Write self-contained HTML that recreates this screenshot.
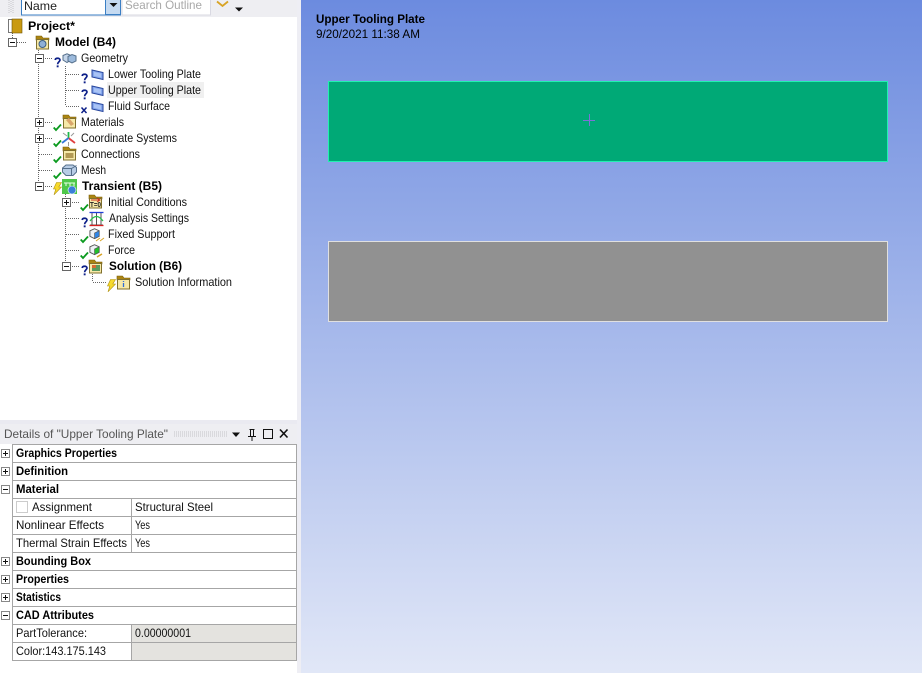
<!DOCTYPE html>
<html><head><meta charset="utf-8"><style>
html,body{margin:0;padding:0;background:#fff;width:922px;height:673px;overflow:hidden}
svg{display:block;position:absolute;left:0;top:0}
text{font-family:"Liberation Sans",sans-serif;font-size:12px;fill:#111}
.b{font-weight:bold;fill:#000}
.l{fill:none;stroke:#666;stroke-width:1;stroke-dasharray:1 1;shape-rendering:crispEdges}
.r{stroke:#a6a6a6;stroke-width:1;shape-rendering:crispEdges;fill:none}
</style></head><body>
<svg width="922" height="673" viewBox="0 0 922 673" xmlns="http://www.w3.org/2000/svg">
<defs>
<linearGradient id="bg" x1="0" y1="0" x2="0" y2="1"><stop offset="0" stop-color="#6c8bdf"/><stop offset="1" stop-color="#e1e7f7"/></linearGradient>
<symbol id="chk" viewBox="0 0 9 7" overflow="visible"><path d="M.7 3.500 3 6 8 .5" fill="none" stroke="#0a9a1e" stroke-width="1.800"/></symbol>
<symbol id="q" viewBox="0 0 8 11" overflow="visible"><path d="M1.200 3C1.400.8 6 .6 6 3c0 1.800-2.400 2-2.400 4.200" fill="none" stroke="#0c1f88" stroke-width="1.700"/><rect x="2.700" y="8.400" width="1.900" height="1.900" fill="#0c1f88"/></symbol>
<symbol id="bolt" viewBox="0 0 9 13" overflow="visible"><path d="M3.500.5h5L5.800 5H8.500L1 12.800 2.800 7H.5z" fill="#f7da2c" stroke="#b09210" stroke-width=".6"/></symbol>
<symbol id="body" viewBox="0 0 13 11" overflow="visible"><path d="M1 1 12 3.500V10.500L1 8z" fill="#86a8ee" stroke="#27459c"/><path d="M3 3 10 4.500v4L3 6.800z" fill="#a9c3f5"/></symbol>
<symbol id="cube" viewBox="0 0 15 11" overflow="visible"><path d="M1 2.500 5 .8l4 1.700v4.500L5 9.500 1 7z" fill="#c6d6ea" stroke="#56708c"/><path d="M6 3.500 10 1.500l4 1.500v5L10 10 6 8z" fill="#9cbadc" stroke="#56708c"/></symbol>
<symbol id="fold" viewBox="0 0 15 15" overflow="visible"><path d="M1 4V1h5.500L8 3h6v2H1z" fill="#ab8512" stroke="#7a5e08" stroke-width=".6"/><rect x="1.500" y="4.500" width="12" height="9.500" fill="#f6e9a8" stroke="#80702e"/></symbol>
<symbol id="cap" viewBox="0 0 13 13" overflow="visible"><path d="M1 3 6 .8 11 3v6L6 11.500 1 9z" fill="#eef2f6" stroke="#555"/><path d="M6 5.500 11 3v6L6 11.500z" fill="currentColor" stroke="#555" stroke-width=".7"/></symbol>
</defs>

<!-- chrome backgrounds -->
<rect x="0" y="0" width="297" height="17" fill="#eeeef2"/>
<rect x="297" y="0" width="4" height="673" fill="#eeeef4"/>
<rect x="0" y="420" width="297" height="4" fill="#eaeaf1"/>
<rect x="0" y="424" width="297" height="20" fill="#eeeef2"/>

<!-- viewport -->
<rect x="301" y="0" width="621" height="673" fill="url(#bg)"/>
<text x="316" y="23" class="b" textLength="109" lengthAdjust="spacingAndGlyphs">Upper Tooling Plate</text>
<text x="316" y="38" style="fill:#000" textLength="104" lengthAdjust="spacingAndGlyphs">9/20/2021 11:38 AM</text>
<rect x="328.500" y="81.500" width="559" height="80" fill="#00a976" stroke="#22f0b0" shape-rendering="crispEdges"/>
<path d="M583 120.500h12M589.500 114v12" stroke="#7d70d8" shape-rendering="crispEdges"/>
<rect x="328.500" y="241.500" width="559" height="80" fill="#919191" stroke="#e0e0e0" shape-rendering="crispEdges"/>

<!-- toolbar -->
<path d="M9 0v13M11 1v12M13 0v13" stroke="#c6c6ca" stroke-dasharray="1 1" shape-rendering="crispEdges"/>
<rect x="21.500" y="-2" width="99" height="17" fill="#fff" stroke="#3b7fc4"/>
<text x="24" y="10" style="fill:#222" textLength="33" lengthAdjust="spacingAndGlyphs">Name</text>
<rect x="106" y="0" width="15" height="15" fill="#c5daf1"/>
<path d="M105.500 0v15M120.500 0v15M106 14.500h15" stroke="#3b7fc4"/>
<path d="M109.500 3h8L113.500 7z" fill="#111"/>
<rect x="122" y="-2" width="88.500" height="17" fill="#fff" stroke="#d9d9e2"/>
<text x="125" y="9" style="fill:#a8a8a8" textLength="77" lengthAdjust="spacingAndGlyphs">Search Outline</text>
<path d="M217 1.500 222.500 6 228 1.500" fill="none" stroke="#d8a324" stroke-width="1.800"/>
<path d="M235 7.500h8L239 11.500z" fill="#111"/>

<!-- tree connectors -->
<path class="l" d="M12.500 31V38M17 42.500H27M38.500 50V182M43 58.500H52M43 122.500H52M43 138.500H52M39 154.500H52M39 170.500H52M43 186.500H52M65.500 66V106M66 74.500H80M66 90.500H80M66 106.500H80M65.500 194V262M70 202.500H80M66 218.500H80M66 234.500H80M66 250.500H80M70 266.500H80M92.500 274V282M93 282.500H106"/>
<!-- expanders -->
<g fill="#fff" stroke="#666" shape-rendering="crispEdges">
<rect x="8.500" y="38.500" width="8" height="8"/><rect x="35.500" y="54.500" width="8" height="8"/><rect x="35.500" y="118.500" width="8" height="8"/><rect x="35.500" y="134.500" width="8" height="8"/><rect x="35.500" y="182.500" width="8" height="8"/><rect x="62.500" y="198.500" width="8" height="8"/><rect x="62.500" y="262.500" width="8" height="8"/>
</g>
<path d="M10 42.500h5M37 58.500h5M37 122.500h5M39.500 120v5M37 138.500h5M39.500 136v5M37 186.500h5M64 202.500h5M66.500 200v5M64 266.500h5" stroke="#111" shape-rendering="crispEdges"/>

<!-- highlight -->
<rect x="107" y="82" width="97" height="16" fill="#f0f0f0"/>

<!-- tree icons -->
<rect x="8.500" y="19.500" width="4" height="13" fill="#fff" stroke="#777"/>
<rect x="12" y="19" width="10" height="14" fill="#c99a12" stroke="#6f5508" stroke-width=".6"/>
<use href="#fold" x="35" y="35" width="15" height="15"/><circle cx="42.500" cy="44" r="3.500" fill="#8fb0d6" stroke="#3b5f86"/>
<use href="#cube" x="62" y="53" width="15" height="11"/>
<use href="#q" x="54" y="57" width="8" height="11"/>
<use href="#body" x="91" y="69" width="13" height="11"/><use href="#q" x="81" y="73" width="8" height="11"/>
<use href="#body" x="91" y="85" width="13" height="11"/><use href="#q" x="81" y="89" width="8" height="11"/>
<use href="#body" x="91" y="101" width="13" height="11"/>
<path d="M81.500 107.500l5 5.500M86.500 107.500l-5 5.500" stroke="#0c1f88" stroke-width="1.500"/>
<use href="#fold" x="62" y="114" width="15" height="15"/><path d="M66 120l5 6 3-2-5-6z" fill="#d9a66c"/>
<use href="#chk" x="53" y="124" width="9" height="7"/>
<g fill="none" stroke-width="1.800"><path d="M68.500 138V132" stroke="#1cb84a"/><path d="M68.500 138 75 143" stroke="#e04040"/><path d="M68.500 138 62 143" stroke="#3878d8"/></g><path d="M63 133l4 3M74 133l-3 3M68.500 146v-4" stroke="#9a9a9a"/>
<use href="#chk" x="53" y="140" width="9" height="7"/>
<use href="#fold" x="62" y="146" width="15" height="15"/><rect x="65.500" y="153" width="8" height="5" fill="#b39a55"/>
<use href="#chk" x="53" y="156" width="9" height="7"/>
<path d="M62.500 168 66 165h7l3.500 2.500V172L73 175.500H66L62.500 172z" fill="#b8cde6" stroke="#56708c"/><path d="M62.500 168.500H71.500L76.500 165.500M71.500 168.500V175" fill="none" stroke="#56708c"/>
<use href="#chk" x="53" y="172" width="9" height="7"/>
<use href="#bolt" x="53" y="182" width="9" height="13"/>
<rect x="62" y="179" width="15" height="15" fill="#4fc84a"/><path d="M64 183h11M66 183v3M70 183v3M74 183v3" stroke="#e8ffe8"/><circle cx="72" cy="190" r="4" fill="#3a7fd8" stroke="#fff" stroke-width=".6"/>
<use href="#fold" x="88" y="194" width="15" height="15"/><path d="M91 200h9M97 198l3 2-3 2" fill="none" stroke="#c9301c"/><text x="90" y="207" style="font-size:7px;font-weight:bold;fill:#222" textLength="11" lengthAdjust="spacingAndGlyphs">T=0</text>
<use href="#chk" x="80" y="204" width="9" height="7"/>
<path d="M90 212.500h13M90 225h13M92 212v13M96.500 212v13M101 212v13" stroke="#555" fill="none"/><path d="M89.500 212.500h14" stroke="#1f3fd8" stroke-width="1.300"/><path d="M89.500 225.500h14" stroke="#d82020" stroke-width="1.300"/><path d="M90 221Q96.500 212 103 221" stroke="#22c24a" fill="none" stroke-width="1.200"/>
<use href="#q" x="81" y="217" width="8" height="11"/>
<use href="#cap" x="89" y="228" width="12" height="12" color="#2f86e8"/><path d="M96 241l4-3M100 241l4-3" stroke="#d8a324"/>
<use href="#chk" x="80" y="236" width="9" height="7"/>
<use href="#cap" x="89" y="244" width="12" height="12" color="#22c22a"/><path d="M97 257l5-3" stroke="#d8a324" stroke-width="1.500"/>
<use href="#chk" x="80" y="252" width="9" height="7"/>
<use href="#fold" x="88" y="259" width="15" height="15"/><rect x="92" y="265" width="8" height="6" fill="#5b9a5c"/><rect x="92" y="265" width="4" height="3" fill="#d86a30"/>
<use href="#q" x="81" y="265" width="8" height="11"/>
<use href="#fold" x="116" y="275" width="15" height="15"/><path d="M123.500 281v1M123.500 283v4" stroke="#2f6fd8" stroke-width="1.300"/>
<use href="#bolt" x="107" y="279" width="9" height="13"/>

<!-- tree text -->
<text x="28" y="30" class="b" textLength="47" lengthAdjust="spacingAndGlyphs">Project*</text>
<text x="55" y="46" class="b" textLength="61" lengthAdjust="spacingAndGlyphs">Model (B4)</text>
<text x="81" y="62" textLength="47" lengthAdjust="spacingAndGlyphs">Geometry</text>
<text x="108" y="78" textLength="93" lengthAdjust="spacingAndGlyphs">Lower Tooling Plate</text>
<text x="108" y="94" textLength="93" lengthAdjust="spacingAndGlyphs">Upper Tooling Plate</text>
<text x="108" y="110" textLength="62" lengthAdjust="spacingAndGlyphs">Fluid Surface</text>
<text x="81" y="126" textLength="43" lengthAdjust="spacingAndGlyphs">Materials</text>
<text x="81" y="142" textLength="96" lengthAdjust="spacingAndGlyphs">Coordinate Systems</text>
<text x="81" y="158" textLength="59" lengthAdjust="spacingAndGlyphs">Connections</text>
<text x="81" y="174" textLength="25" lengthAdjust="spacingAndGlyphs">Mesh</text>
<text x="82" y="190" class="b" textLength="80" lengthAdjust="spacingAndGlyphs">Transient (B5)</text>
<text x="108" y="206" textLength="79" lengthAdjust="spacingAndGlyphs">Initial Conditions</text>
<text x="109" y="222" textLength="80" lengthAdjust="spacingAndGlyphs">Analysis Settings</text>
<text x="108" y="238" textLength="67" lengthAdjust="spacingAndGlyphs">Fixed Support</text>
<text x="108" y="254" textLength="27" lengthAdjust="spacingAndGlyphs">Force</text>
<text x="109" y="270" class="b" textLength="73" lengthAdjust="spacingAndGlyphs">Solution (B6)</text>
<text x="135" y="286" textLength="97" lengthAdjust="spacingAndGlyphs">Solution Information</text>

<!-- details title -->
<text x="4" y="438" style="fill:#555" textLength="164" lengthAdjust="spacingAndGlyphs">Details of "Upper Tooling Plate"</text>
<path d="M174 432h53M174 434h53M174 436h53" stroke="#c4c4c8" stroke-dasharray="1 1" shape-rendering="crispEdges"/>
<path d="M232 432.500h8L236 437z" fill="#111"/>
<path d="M249.500 429.500h5M250.500 430v6M253.500 430v6M248 436.500h8M252 437v4" stroke="#111" stroke-width="1.200" fill="none" shape-rendering="crispEdges"/>
<rect x="263.500" y="429.500" width="9" height="9" fill="none" stroke="#111" shape-rendering="crispEdges"/>
<path d="M280 429.500l7.500 8M287.500 429.500l-7.500 8" stroke="#111" stroke-width="1.600"/>

<!-- details grid -->
<rect x="132" y="625" width="164" height="35" fill="#e4e3df"/>
<g class="r">
<rect x="12.500" y="444.500" width="284" height="216"/>
<path d="M12 462.500h285M12 480.500h285M12 498.500h285M12 516.500h285M12 534.500h285M12 552.500h285M12 570.500h285M12 588.500h285M12 606.500h285M12 624.500h285M12 642.500h285M131.500 498v54M131.500 624v36"/>
</g>
<rect x="16.500" y="501.500" width="11" height="11" fill="#fff" stroke="#ccc" shape-rendering="crispEdges"/>
<g fill="#fff" stroke="#888" shape-rendering="crispEdges">
<rect x="1.500" y="449.500" width="8" height="8"/><rect x="1.500" y="467.500" width="8" height="8"/><rect x="1.500" y="485.500" width="8" height="8"/><rect x="1.500" y="557.500" width="8" height="8"/><rect x="1.500" y="575.500" width="8" height="8"/><rect x="1.500" y="593.500" width="8" height="8"/><rect x="1.500" y="611.500" width="8" height="8"/>
</g>
<path d="M3 453.500h5M5.500 451v5M3 471.500h5M5.500 469v5M3 489.500h5M3 561.500h5M5.500 559v5M3 579.500h5M5.500 577v5M3 597.500h5M5.500 595v5M3 615.500h5" stroke="#111" shape-rendering="crispEdges"/>

<text x="16" y="457" class="b" textLength="101" lengthAdjust="spacingAndGlyphs">Graphics Properties</text>
<text x="16" y="475" class="b" textLength="52" lengthAdjust="spacingAndGlyphs">Definition</text>
<text x="16" y="493" class="b" textLength="43" lengthAdjust="spacingAndGlyphs">Material</text>
<text x="32" y="511" textLength="60" lengthAdjust="spacingAndGlyphs">Assignment</text>
<text x="135" y="511" textLength="78" lengthAdjust="spacingAndGlyphs">Structural Steel</text>
<text x="16" y="529" textLength="88" lengthAdjust="spacingAndGlyphs">Nonlinear Effects</text>
<text x="135" y="529" textLength="15" lengthAdjust="spacingAndGlyphs">Yes</text>
<text x="16" y="547" textLength="111" lengthAdjust="spacingAndGlyphs">Thermal Strain Effects</text>
<text x="135" y="547" textLength="15" lengthAdjust="spacingAndGlyphs">Yes</text>
<text x="16" y="565" class="b" textLength="75" lengthAdjust="spacingAndGlyphs">Bounding Box</text>
<text x="16" y="583" class="b" textLength="53" lengthAdjust="spacingAndGlyphs">Properties</text>
<text x="16" y="601" class="b" textLength="45" lengthAdjust="spacingAndGlyphs">Statistics</text>
<text x="16" y="619" class="b" textLength="78" lengthAdjust="spacingAndGlyphs">CAD Attributes</text>
<text x="16" y="637" textLength="71" lengthAdjust="spacingAndGlyphs">PartTolerance:</text>
<text x="135" y="637" textLength="56" lengthAdjust="spacingAndGlyphs">0.00000001</text>
<text x="16" y="655" textLength="90" lengthAdjust="spacingAndGlyphs">Color:143.175.143</text>
</svg>
</body></html>
